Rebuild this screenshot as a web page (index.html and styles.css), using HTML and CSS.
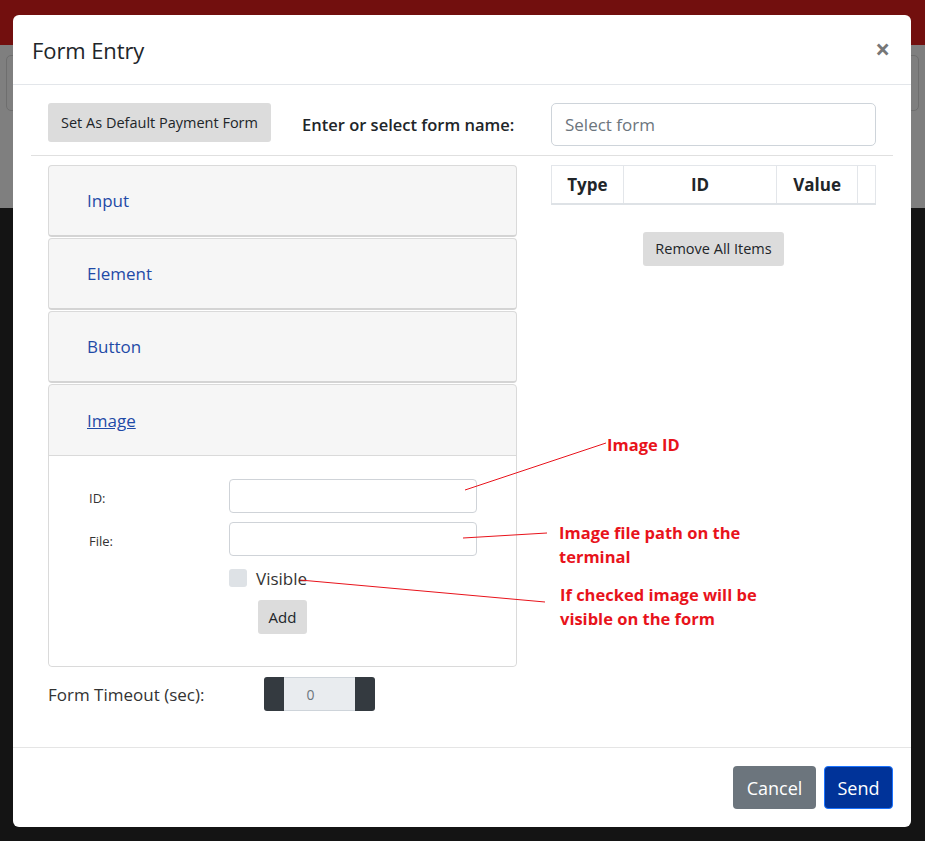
FILE: index.html
```html
<!DOCTYPE html>
<html>
<head>
<meta charset="utf-8">
<link rel="stylesheet" href="styles.css">
</head>
<body>
<div class="page">
  <div class="topbar"></div>
  <div class="dimmed">
    <div class="ghost-box"></div>
  </div>
  <div class="dark"></div>
</div>

<div class="modal">
  <div class="modal-header">
    <h5 class="modal-title">Form Entry</h5>
    <span class="close">&times;</span>
  </div>
  <div class="modal-body">
    <div class="row top-row">
      <div class="col-left top-left">
        <button class="btn-light-grey btn-default">Set As Default Payment Form</button>
        <label class="form-name-label">Enter or select form name:</label>
      </div>
      <div class="col-right">
        <div class="select-input">Select form</div>
      </div>
    </div>
    <div class="divider"></div>
    <div class="row main-row">
      <div class="col-left">
        <div class="card">
          <div class="card-header"><a class="card-link">Input</a></div>
        </div>
        <div class="card">
          <div class="card-header"><a class="card-link">Element</a></div>
        </div>
        <div class="card">
          <div class="card-header"><a class="card-link">Button</a></div>
        </div>
        <div class="card card-open">
          <div class="card-header"><a class="card-link underline">Image</a></div>
          <div class="card-body">
            <div class="field-row">
              <span class="field-label">ID:</span>
              <div class="text-input"></div>
            </div>
            <div class="field-row">
              <span class="field-label">File:</span>
              <div class="text-input"></div>
            </div>
            <div class="check-row">
              <span class="checkbox"></span>
              <span class="check-label">Visible</span>
            </div>
            <div class="add-row">
              <button class="btn-light-grey btn-add">Add</button>
            </div>
          </div>
        </div>
      </div>
      <div class="col-right">
        <table class="items-table">
          <thead>
            <tr>
              <th class="c-type">Type</th>
              <th class="c-id">ID</th>
              <th class="c-value">Value</th>
              <th class="c-extra"></th>
            </tr>
          </thead>
        </table>
        <div class="remove-wrap">
          <button class="btn-light-grey btn-remove">Remove All Items</button>
        </div>
      </div>
    </div>
    <div class="timeout-row">
      <span class="timeout-label">Form Timeout (sec):</span>
      <div class="spinner">
        <span class="spin-btn spin-left"></span>
        <span class="spin-value">0</span>
        <span class="spin-btn spin-right"></span>
      </div>
    </div>
  </div>
  <div class="modal-footer">
    <button class="btn-cancel">Cancel</button>
    <button class="btn-send">Send</button>
  </div>
</div>

<svg class="annot-lines" width="925" height="841" viewBox="0 0 925 841">
  <line x1="465" y1="490" x2="606" y2="443" stroke="#e8131b" stroke-width="1"/>
  <line x1="463" y1="538" x2="547" y2="533" stroke="#e8131b" stroke-width="1"/>
  <line x1="300" y1="580" x2="545" y2="602" stroke="#e8131b" stroke-width="1"/>
</svg>
<div class="annot annot-1">Image ID</div>
<div class="annot annot-2">Image file path on the<br>terminal</div>
<div class="annot annot-3">If checked image will be<br>visible on the form</div>
</body>
</html>
```
FILE: styles.css
```css
* { box-sizing: border-box; }
html, body { margin: 0; padding: 0; }
body {
  width: 925px;
  height: 841px;
  overflow: hidden;
  font-family: "Segoe UI", "Open Sans", "Noto Sans", sans-serif;
  color: #212529;
  position: relative;
}
.page { display: flex; flex-direction: column; height: 841px; }
.topbar { height: 45px; background: #720f0e; }
.dimmed { height: 163px; background: #7f7f7f; padding: 10px 6px 0 6px; }
.ghost-box {
  height: 56px;
  border: 1px solid #6e6e6e;
  border-radius: 5px;
}
.dark { flex: 1; background: #141414; }

.modal {
  position: absolute;
  left: 13px;
  top: 15px;
  width: 898px;
  height: 812px;
  background: #fff;
  border-radius: 6px;
  display: flex;
  flex-direction: column;
}
.modal-header {
  height: 70px;
  border-bottom: 1px solid #e3e6ea;
  display: flex;
  align-items: center;
  justify-content: space-between;
  padding: 0 19px 0 19px;
}
.modal-title {
  margin: 0;
  font-size: 22px;
  font-weight: 500;
  color: #212529;
  letter-spacing: -0.1px;
}
.close {
  font-size: 26px;
  font-weight: 700;
  color: #777;
  line-height: 1;
  margin-top: -2px;
  margin-right: 2px;
}
.modal-body {
  flex: 1;
  padding: 18px 18px 0 18px;
}
.row { display: flex; }
.col-left { width: 503px; padding: 0 17px; }
.col-right { width: 359px; padding: 0 17px; }
.top-row { height: 44px; }
.top-left { display: flex; align-items: flex-start; }
.btn-light-grey {
  background: #dcdcdc;
  border: none;
  border-radius: 3px;
  font-family: inherit;
  color: #212529;
  font-size: 14.5px;
  padding: 0;
}
.btn-default { width: 223px; height: 39px; }
.form-name-label {
  margin-left: 31px;
  margin-top: 10px;
  font-size: 16.5px;
  font-weight: 600;
  color: #212529;
}
.select-input {
  height: 43px;
  border: 1px solid #ced4da;
  border-radius: 5px;
  padding: 0 13px;
  display: flex;
  align-items: center;
  color: #6c757d;
  font-size: 17px;
}
.divider {
  height: 1px;
  background: #e0e0e0;
  margin: 8px 0 9px 0;
}
.main-row { align-items: flex-start; }
.card {
  border: 1px solid #dadada;
  border-bottom: 2px solid #d4d4d4;
  border-radius: 4px;
  background: #f6f6f6;
  margin-bottom: 1px;
}
.card-header {
  height: 69px;
  display: flex;
  align-items: center;
  padding-left: 38px;
}
.card-link {
  color: #1f4aa7;
  font-size: 17px;
  text-decoration: none;
}
.card-link.underline { text-decoration: underline; }
.card-open { border-bottom: 1px solid #dadada; }
.card-open .card-header {
  height: 71px;
  border-bottom: 1px solid #dadada;
}
.card-body {
  background: #fff;
  height: 210px;
  border-radius: 0 0 4px 4px;
  padding: 23px 0 0 40px;
}
.field-row {
  display: flex;
  align-items: center;
  height: 34px;
  margin-bottom: 9px;
}
.field-label {
  width: 140px;
  font-size: 13px;
  color: #333;
  padding-top: 3px;
}
.text-input {
  width: 248px;
  height: 34px;
  border: 1px solid #cfd3d8;
  border-radius: 4px;
}
.check-row {
  display: flex;
  align-items: center;
  height: 26px;
  margin-left: 140px;
  margin-top: 1px;
}
.checkbox {
  width: 18px;
  height: 18px;
  background: #dee2e6;
  border-radius: 3px;
  margin-right: 9px;
}
.check-label { font-size: 17px; color: #333; }
.add-row { margin-left: 169px; margin-top: 9px; }
.btn-add { width: 49px; height: 34px; font-size: 15px; }

.items-table {
  border-collapse: collapse;
  width: 325px;
  margin-top: 0;
}
.items-table th {
  height: 38px;
  border: 1px solid #e3e6ea;
  border-bottom: 2px solid #dee2e6;
  font-size: 17px;
  font-weight: 700;
  text-align: center;
  padding: 0;
  color: #212529;
}
.c-type { width: 72px; }
.c-id { width: 154px; }
.c-value { width: 81px; }
.c-extra { width: 18px; }
.remove-wrap { display: flex; justify-content: center; margin-top: 27px; }
.btn-remove { width: 141px; height: 34px; }

.timeout-row {
  display: flex;
  align-items: center;
  margin-top: 9px;
  padding-left: 17px;
}
.timeout-label { font-size: 17px; color: #333; width: 216px; }
.spinner {
  display: flex;
  height: 34px;
  width: 111px;
}
.spin-btn { width: 20px; background: #343a40; }
.spin-left { border-radius: 3px 0 0 3px; }
.spin-right { border-radius: 0 3px 3px 0; }
.spin-value {
  flex: 1;
  background: #e9ecef;
  border-top: 1px solid #ced4da;
  border-bottom: 1px solid #ced4da;
  color: #6c757d;
  font-size: 14px;
  display: flex;
  align-items: center;
  justify-content: center;
  padding-right: 18px;
}

.modal-footer {
  height: 80px;
  border-top: 1px solid #e5e5e5;
  display: flex;
  justify-content: flex-end;
  align-items: center;
  padding: 0 18px;
  gap: 8px;
}
.btn-cancel, .btn-send {
  height: 43px;
  border-radius: 4px;
  font-family: inherit;
  font-size: 18px;
  color: #fff;
  padding: 0;
}
.btn-cancel { width: 83px; background: #6c757d; border: none; }
.btn-send { width: 69px; background: #003399; border: 1px solid #1a73ff; }

.annot-lines { position: absolute; left: 0; top: 0; pointer-events: none; }
.annot {
  position: absolute;
  color: #e8131b;
  font-weight: 700;
  font-size: 16.5px;
  line-height: 24px;
}
.annot-1 { left: 607px; top: 433px; }
.annot-2 { left: 559px; top: 521px; }
.annot-3 { left: 560px; top: 583px; }
```
